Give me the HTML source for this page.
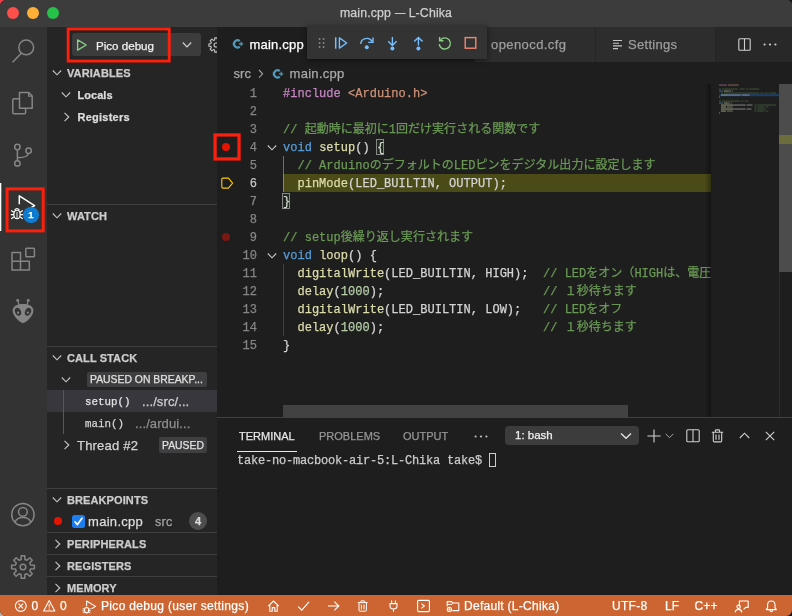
<!DOCTYPE html>
<html lang="ja">
<head>
<meta charset="utf-8">
<title>main.cpp — L-Chika</title>
<style>
*{box-sizing:border-box;margin:0;padding:0}
html,body{width:792px;height:616px;overflow:hidden;background:#161616}
body{-webkit-text-stroke:0.25px;font-family:"Liberation Sans","Noto Sans CJK JP",sans-serif;font-size:13px;color:#ccc;position:relative}
.abs{position:absolute}
#win{will-change:transform;position:absolute;left:0;top:0;width:792px;height:616px;overflow:hidden;border-radius:6px 5px 6px 6px;background:#1e1e1e}
#title{left:0;top:0;width:792px;height:27px;background:#3c3c3c;text-align:center;line-height:27px;font-size:12.3px;letter-spacing:0.15px;color:#cfcfcf}
.tl{position:absolute;top:7px;width:12px;height:12px;border-radius:50%}
#act{left:0;top:27px;width:47px;height:568px;background:#333333}
#side{left:47px;top:27px;width:170px;height:568px;background:#252526}
#status{left:0;top:595px;width:792px;height:21px;background:#cc6531;color:#fff;font-size:12px}
#status span{position:absolute;top:0;line-height:22px;white-space:nowrap}
.hdr{position:absolute;left:0;width:170px;height:22px;line-height:22px;font-size:11px;font-weight:bold;color:#ccc;padding-left:20px;letter-spacing:0.1px}
.sep{position:absolute;left:0;width:170px;height:1px;background:#3f3f40}
.chev{position:absolute;width:16px;height:16px}
.row{position:absolute;left:0;width:170px;height:22px;line-height:22px;white-space:nowrap}
.code{margin-top:1px;letter-spacing:0.02px;font-family:"Liberation Mono","Noto Sans CJK JP",monospace;font-size:12px;line-height:18px;white-space:pre;position:absolute;left:283px;height:18px;color:#d4d4d4}
.ln{margin-top:1px;font-family:"Liberation Mono",monospace;font-size:12px;line-height:18px;position:absolute;left:226px;width:31px;text-align:right;color:#858585;height:18px}
.c{color:#6a9955}.k{color:#569cd6}.f{color:#dcdcaa}.p{color:#c586c0}.s{color:#ce9178}.n{color:#b5cea8}.m{color:#569cd6}
.redbox{position:absolute;border:2px solid #f4220f}
svg{position:absolute;overflow:visible}
</style>
</head>
<body>
<div class="abs" style="left:0;top:0;width:6px;height:6px;background:#e8444c"></div><div class="abs" style="left:0;top:610px;width:6px;height:6px;background:#b4b4b4"></div>
<div id="win">
<!-- title bar -->
<div id="title" class="abs">main.cpp <span style="display:inline-block;transform:scaleX(0.84);margin:0 -1px">—</span> L-Chika</div>
<div class="tl" style="left:7px;background:#fd4f4c"></div>
<div class="tl" style="left:27px;background:#fdb035"></div>
<div class="tl" style="left:47px;background:#27c24a"></div>

<!-- activity bar -->
<div id="act" class="abs"></div>

<!-- activity icons -->
<svg style="left:0;top:27px" width="47" height="568" viewBox="0 27 47 568" fill="none" stroke="#858585" stroke-width="1.5">
<!-- search -->
<circle cx="26.2" cy="47.4" r="7.4"/><path d="M21.3 53.2 L12.6 62.2"/>
<!-- explorer -->
<path d="M19.5 108.2 V92.5 H28.8 L32.2 96 V108.2 Z" stroke-linejoin="round"/><path d="M28.6 92.6 V96.2 H32.2" stroke-width="1.2"/>
<path d="M19.3 98.8 H14 Q12.8 98.8 12.8 100 V112.6 Q12.8 113.8 14 113.8 H24.4 Q25.6 113.8 25.6 112.6 V108.4" />
<!-- scm -->
<circle cx="17.4" cy="147" r="2.7"/><circle cx="17.4" cy="163.4" r="2.7"/><circle cx="28.6" cy="150.7" r="2.7"/>
<path d="M17.4 149.8 V160.6"/><path d="M28.3 153.5 Q27.8 157.6 17.6 157.8"/>
<!-- extensions -->
<path d="M12 252.6 H20.5 V261.3 H29.3 V270 H12 Z M12 261.3 H20.5 V270" stroke-linejoin="round"/>
<rect x="25.8" y="248.2" width="8.6" height="8.6" rx="0.8"/>
<!-- account -->
<circle cx="22.9" cy="514.6" r="11.2"/><circle cx="22.9" cy="511.8" r="4.4"/><path d="M15 522.4 Q16.4 517.4 22.9 517.4 Q29.4 517.4 30.8 522.4"/>
</svg>
<!-- gear -->
<svg style="left:10px;top:554px" width="26" height="26" viewBox="-13 -13 26 26" fill="none" stroke="#858585" stroke-width="1.5" stroke-linejoin="round">
<path d="M-1.93 -7.56 L-1.72 -11.37 L1.72 -11.37 L1.93 -7.56 L3.98 -6.71 L6.83 -9.26 L9.26 -6.83 L6.71 -3.98 L7.56 -1.93 L11.37 -1.72 L11.37 1.72 L7.56 1.93 L6.71 3.98 L9.26 6.83 L6.83 9.26 L3.98 6.71 L1.93 7.56 L1.72 11.37 L-1.72 11.37 L-1.93 7.56 L-3.98 6.71 L-6.83 9.26 L-9.26 6.83 L-6.71 3.98 L-7.56 1.93 L-11.37 1.72 L-11.37 -1.72 L-7.56 -1.93 L-6.71 -3.98 L-9.26 -6.83 L-6.83 -9.26 L-3.98 -6.71 Z"/>
<circle cx="0" cy="0" r="2.8"/>
</svg>
<!-- platformio alien -->
<svg style="left:0;top:295px" width="47" height="32" viewBox="0 295 47 32">
<path d="M23 304 C29.5 304 33.4 306.6 33.4 310.6 C33.4 315.6 27 322.2 23 323.2 C19 322.2 12.6 315.6 12.6 310.6 C12.6 306.6 16.5 304 23 304 Z" fill="#858585"/>
<path d="M18.9 305 L17.9 300.6 M27.1 305 L28.1 300.6" stroke="#858585" stroke-width="1.2" fill="none"/>
<circle cx="17.7" cy="300.4" r="1.45" fill="#858585"/><circle cx="28.2" cy="300.4" r="1.45" fill="#858585"/>
<ellipse cx="18" cy="311.8" rx="2.9" ry="4.1" transform="rotate(-24 18 311.8)" fill="#343434"/>
<ellipse cx="28" cy="311.8" rx="2.9" ry="4.1" transform="rotate(24 28 311.8)" fill="#343434"/>
<circle cx="18.1" cy="312.7" r="1.15" fill="#858585"/><circle cx="27.9" cy="312.7" r="1.15" fill="#858585"/>
</svg>
<!-- debug active -->
<svg style="left:0;top:183px" width="3" height="48"><rect x="0" y="0" width="1.3" height="48" fill="#fff"/></svg>
<svg style="left:0;top:183px" width="47" height="50" viewBox="0 183 47 50" fill="none" stroke="#fff" stroke-width="1.5">
<path d="M19.3 204.2 V195.8 L34.6 205.7 L31.2 207.6" stroke-linejoin="round"/>
<ellipse cx="17" cy="214.4" rx="3.2" ry="4.3" stroke-width="1.3"/>
<path d="M14.6 210.2 Q17 206.8 19.4 210.2" stroke-width="1.2"/>
<path d="M17 212 V218.4" stroke-width="0.9"/>
<path d="M11.2 210.4 L13.8 212.2 M10.8 214.6 H13.6 M11.2 218.8 L13.8 217 M22.8 210.4 L20.2 212.2 M23.2 214.6 H20.4 M22.8 218.8 L20.2 217" stroke-width="1.2"/>
</svg>
<div class="abs" style="left:23.4px;top:207.4px;width:15.2px;height:15.2px;border-radius:50%;background:#0e7bd0;color:#fff;font-size:9.5px;font-weight:bold;line-height:15.5px;text-align:center">1</div>
<svg style="left:0;top:0" width="792" height="616" viewBox="0 0 792 616"><rect x="7.10" y="188.90" width="36.10" height="42.00" fill="none" stroke="#fb1f0c" stroke-width="3.0"/></svg>

<!-- sidebar -->
<div id="side" class="abs"></div>

<!-- debug dropdown -->
<div class="abs" style="left:72px;top:33px;width:129px;height:23px;background:#3c3c3c;border-radius:3px"></div>
<svg style="left:76px;top:39px" width="12" height="12" viewBox="0 0 12 12"><path d="M1.6 0.9 L10.2 6 L1.6 11.1 Z" fill="none" stroke="#89d185" stroke-width="1.3" stroke-linejoin="round"/></svg>
<div class="abs" style="left:96px;top:33.5px;height:23px;line-height:23px;font-size:11.6px;color:#f0f0f0;white-space:nowrap">Pico debug</div>
<svg style="left:182px;top:41px" width="10" height="8" viewBox="0 0 10 8"><path d="M0.8 1.5 L5 5.8 L9.2 1.5" fill="none" stroke="#d0d0d0" stroke-width="1.2"/></svg>
<svg style="left:0;top:0" width="792" height="616" viewBox="0 0 792 616"><rect x="68.15" y="28.95" width="101.10" height="32.10" fill="none" stroke="#fb1f0c" stroke-width="2.9"/></svg>
<!-- gear (clipped) -->
<div class="abs" style="left:205px;top:35px;width:12px;height:20px;overflow:hidden"><svg style="left:3px;top:2.3px" width="16" height="16" viewBox="-8 -8 16 16" fill="none" stroke="#c5c5c5" stroke-width="1.1" stroke-linejoin="round"><path d="M-1.41 -5.11 L-1.22 -7.10 L1.22 -7.10 L1.41 -5.11 L2.61 -4.61 L4.16 -5.88 L5.88 -4.16 L4.61 -2.61 L5.11 -1.41 L7.10 -1.22 L7.10 1.22 L5.11 1.41 L4.61 2.61 L5.88 4.16 L4.16 5.88 L2.61 4.61 L1.41 5.11 L1.22 7.10 L-1.22 7.10 L-1.41 5.11 L-2.61 4.61 L-4.16 5.88 L-5.88 4.16 L-4.61 2.61 L-5.11 1.41 L-7.10 1.22 L-7.10 -1.22 L-5.11 -1.41 L-4.61 -2.61 L-5.88 -4.16 L-4.16 -5.88 L-2.61 -4.61 Z"/><circle cx="0" cy="0" r="2"/></svg></div>

<!-- VARIABLES -->
<div class="hdr" style="left:47px;top:62px">VARIABLES</div>
<svg style="left:52px;top:69px" width="10" height="8" viewBox="0 0 10 8"><path d="M0.8 1.5 L5 5.8 L9.2 1.5" fill="none" stroke="#c5c5c5" stroke-width="1.1"/></svg>
<div class="row" style="left:47px;top:84px;padding-left:30.5px;letter-spacing:0.05px;font-size:11px;font-weight:bold;color:#ddd">Locals</div>
<svg style="left:61px;top:91px" width="10" height="8" viewBox="0 0 10 8"><path d="M0.8 1.5 L5 5.8 L9.2 1.5" fill="none" stroke="#c5c5c5" stroke-width="1.1"/></svg>
<div class="row" style="left:47px;top:106px;padding-left:30.5px;letter-spacing:0.25px;font-size:11px;font-weight:bold;color:#ddd">Registers</div>
<svg style="left:63px;top:112px" width="8" height="10" viewBox="0 0 8 10"><path d="M1.5 0.8 L5.8 5 L1.5 9.2" fill="none" stroke="#c5c5c5" stroke-width="1.1"/></svg>

<!-- WATCH -->
<div class="sep" style="left:47px;top:204px"></div>
<div class="hdr" style="left:47px;top:205px">WATCH</div>
<svg style="left:52px;top:212px" width="10" height="8" viewBox="0 0 10 8"><path d="M0.8 1.5 L5 5.8 L9.2 1.5" fill="none" stroke="#c5c5c5" stroke-width="1.1"/></svg>

<!-- CALL STACK -->
<div class="sep" style="left:47px;top:346px"></div>
<div class="hdr" style="left:47px;top:347px">CALL STACK</div>
<svg style="left:52px;top:354px" width="10" height="8" viewBox="0 0 10 8"><path d="M0.8 1.5 L5 5.8 L9.2 1.5" fill="none" stroke="#c5c5c5" stroke-width="1.1"/></svg>
<svg style="left:61px;top:376px" width="10" height="8" viewBox="0 0 10 8"><path d="M0.8 1.5 L5 5.8 L9.2 1.5" fill="none" stroke="#c5c5c5" stroke-width="1.1"/></svg>
<div class="abs" style="left:87px;top:372px;width:120px;height:15px;background:#3f3f41;border-radius:2px;font-size:10.4px;line-height:16px;color:#e0e0e0;padding-left:3px;white-space:nowrap;overflow:hidden;letter-spacing:0">PAUSED ON BREAKP...</div>
<div class="abs" style="left:47px;top:390px;width:170px;height:22px;background:#37373d"></div>
<div class="abs" style="left:63px;top:390px;width:1px;height:44px;background:#585858"></div>
<div class="abs" style="left:85px;top:390.5px;height:22px;line-height:22px;font-family:'Liberation Mono',monospace;font-size:10.8px;color:#e4e4e4;white-space:nowrap">setup()</div>
<div class="abs" style="left:142px;top:390.5px;letter-spacing:0.1px;height:22px;line-height:22px;font-size:13px;color:#d0d0d0;white-space:nowrap">.../src/...</div>
<div class="abs" style="left:85px;top:413px;height:22px;line-height:22px;font-family:'Liberation Mono',monospace;font-size:10.8px;color:#d4d4d4;white-space:nowrap">main()</div>
<div class="abs" style="left:135px;top:413px;letter-spacing:0.1px;height:22px;line-height:22px;font-size:13px;color:#8f8f8f;white-space:nowrap">.../ardui...</div>
<svg style="left:63px;top:440px" width="8" height="10" viewBox="0 0 8 10"><path d="M1.5 0.8 L5.8 5 L1.5 9.2" fill="none" stroke="#c5c5c5" stroke-width="1.1"/></svg>
<div class="abs" style="left:77px;top:434.5px;height:22px;line-height:22px;font-size:13px;letter-spacing:0.2px;color:#d4d4d4;white-space:nowrap">Thread #2</div>
<div class="abs" style="left:159px;top:437px;width:48px;height:16px;background:#3f3f41;border-radius:2px;font-size:10.4px;line-height:17px;color:#e0e0e0;text-align:center;letter-spacing:0">PAUSED</div>

<!-- BREAKPOINTS -->
<div class="sep" style="left:47px;top:488px"></div>
<div class="hdr" style="left:47px;top:489px">BREAKPOINTS</div>
<svg style="left:52px;top:496px" width="10" height="8" viewBox="0 0 10 8"><path d="M0.8 1.5 L5 5.8 L9.2 1.5" fill="none" stroke="#c5c5c5" stroke-width="1.1"/></svg>
<div class="abs" style="left:54px;top:517px;width:8px;height:8px;border-radius:50%;background:#e51400"></div>
<div class="abs" style="left:72px;top:515px;width:13px;height:13px;border-radius:2.5px;background:#1c7cf0"></div>
<svg style="left:72px;top:515px" width="13" height="13" viewBox="0 0 13 13"><path d="M3 6.8 L5.4 9.6 L10 3.2" fill="none" stroke="#fff" stroke-width="1.7" stroke-linecap="round" stroke-linejoin="round"/></svg>
<div class="abs" style="left:88px;top:510.5px;height:22px;line-height:22px;font-size:13px;letter-spacing:0.3px;color:#dcdcdc;white-space:nowrap">main.cpp</div>
<div class="abs" style="left:155px;top:510.5px;height:22px;line-height:22px;font-size:12.5px;letter-spacing:0.3px;color:#a5a5a5;white-space:nowrap">src</div>
<div class="abs" style="left:189px;top:512px;width:18px;height:18px;border-radius:50%;background:#4d4d4d;font-size:11px;line-height:18px;color:#ddd;text-align:center;font-weight:bold">4</div>
<div class="sep" style="left:47px;top:532px"></div>
<div class="hdr" style="left:47px;top:533px">PERIPHERALS</div>
<svg style="left:54px;top:539px" width="8" height="10" viewBox="0 0 8 10"><path d="M1.5 0.8 L5.8 5 L1.5 9.2" fill="none" stroke="#c5c5c5" stroke-width="1.1"/></svg>
<div class="sep" style="left:47px;top:554px"></div>
<div class="hdr" style="left:47px;top:555px">REGISTERS</div>
<svg style="left:54px;top:561px" width="8" height="10" viewBox="0 0 8 10"><path d="M1.5 0.8 L5.8 5 L1.5 9.2" fill="none" stroke="#c5c5c5" stroke-width="1.1"/></svg>
<div class="sep" style="left:47px;top:576px"></div>
<div class="hdr" style="left:47px;top:577px">MEMORY</div>
<svg style="left:54px;top:583px" width="8" height="10" viewBox="0 0 8 10"><path d="M1.5 0.8 L5.8 5 L1.5 9.2" fill="none" stroke="#c5c5c5" stroke-width="1.1"/></svg>

<!-- editor -->
<div id="editor" class="abs" style="left:217px;top:27px;width:575px;height:568px"></div>

<!-- tab bar -->
<div class="abs" style="left:217px;top:27px;width:575px;height:35px;background:#252526"></div>
<div class="abs" style="left:217px;top:27px;width:257px;height:35px;background:#1e1e1e"></div>
<div class="abs" style="left:475px;top:27px;width:120px;height:35px;background:#2d2d2d"></div>
<div class="abs" style="left:596px;top:27px;width:119px;height:35px;background:#2d2d2d"></div>
<div class="abs" style="left:716px;top:27px;width:76px;height:35px;background:#282828"></div>
<div class="abs" style="left:249.5px;top:27px;height:35px;line-height:35px;font-size:13px;letter-spacing:0.2px;color:#fff;white-space:nowrap">main.cpp</div>
<div class="abs" style="left:491px;top:27px;height:35px;line-height:35px;font-size:13px;letter-spacing:0.42px;color:#9d9d9d;white-space:nowrap">openocd.cfg</div>
<div class="abs" style="left:628px;top:27px;height:35px;line-height:35px;font-size:13px;letter-spacing:0.3px;color:#9d9d9d;white-space:nowrap">Settings</div>
<!-- breadcrumbs -->
<div class="abs" style="left:233.4px;top:62.7px;letter-spacing:0.2px;height:22px;line-height:22px;font-size:13px;color:#a9a9a9;white-space:nowrap">src</div>
<div class="abs" style="left:289.5px;top:62.7px;height:22px;line-height:22px;font-size:13px;letter-spacing:0.3px;color:#a9a9a9;white-space:nowrap">main.cpp</div>
<!-- current line highlight -->
<div class="abs" style="left:283px;top:174px;width:428px;height:18px;background:#4b4b18"></div>
<!-- indent guides -->
<div class="abs" style="left:283px;top:156px;width:1px;height:36px;background:#6e6e6e"></div>
<div class="abs" style="left:283px;top:174px;width:1px;height:18px;background:#8a8a6a"></div>
<div class="abs" style="left:283px;top:264px;width:1px;height:72px;background:#404040"></div>
<!-- bracket match -->
<div class="abs" style="left:376px;top:139px;width:8px;height:16px;border:1px solid #888;background:#1e2a1e"></div>
<div class="abs" style="left:282px;top:193px;width:8px;height:16px;border:1px solid #888;background:#1e2a1e"></div>
<div class="ln" style="top:84px;color:#858585">1</div><div class="code" style="top:84px"><span class="p">#include</span> <span class="s">&lt;Arduino.h&gt;</span></div>
<div class="ln" style="top:102px;color:#858585">2</div><div class="code" style="top:102px"></div>
<div class="ln" style="top:120px;color:#858585">3</div><div class="code" style="top:120px"><span class="c">// 起動時に最初に1回だけ実行される関数です</span></div>
<div class="ln" style="top:138px;color:#858585">4</div><div class="code" style="top:138px"><span class="k">void</span> <span class="f">setup</span>() {</div>
<div class="ln" style="top:156px;color:#858585">5</div><div class="code" style="top:156px">  <span class="c">// ArduinoのデフォルトのLEDピンをデジタル出力に設定します</span></div>
<div class="ln" style="top:174px;color:#c6c6c6">6</div><div class="code" style="top:174px">  <span class="f">pinMode</span>(LED_BUILTIN, OUTPUT);</div>
<div class="ln" style="top:192px;color:#858585">7</div><div class="code" style="top:192px">}</div>
<div class="ln" style="top:210px;color:#858585">8</div><div class="code" style="top:210px"></div>
<div class="ln" style="top:228px;color:#858585">9</div><div class="code" style="top:228px"><span class="c">// setup後繰り返し実行されます</span></div>
<div class="ln" style="top:246px;color:#858585">10</div><div class="code" style="top:246px"><span class="k">void</span> <span class="f">loop</span>() {</div>
<div class="ln" style="top:264px;color:#858585">11</div><div class="code" style="top:264px">  <span class="f">digitalWrite</span>(LED_BUILTIN, HIGH);  <span class="c">// LEDをオン（HIGHは、電圧を高くする）</span></div>
<div class="ln" style="top:282px;color:#858585">12</div><div class="code" style="top:282px">  <span class="f">delay</span>(<span class="n">1000</span>);                      <span class="c">// １秒待ちます</span></div>
<div class="ln" style="top:300px;color:#858585">13</div><div class="code" style="top:300px">  <span class="f">digitalWrite</span>(LED_BUILTIN, LOW);   <span class="c">// LEDをオフ</span></div>
<div class="ln" style="top:318px;color:#858585">14</div><div class="code" style="top:318px">  <span class="f">delay</span>(<span class="n">1000</span>);                      <span class="c">// １秒待ちます</span></div>
<div class="ln" style="top:336px;color:#858585">15</div><div class="code" style="top:336px">}</div>

<!-- minimap + scrollbars -->
<div class="abs" style="left:705px;top:84px;width:6px;height:333px;background:linear-gradient(90deg,rgba(0,0,0,0),rgba(0,0,0,0.35))"></div>
<div class="abs" style="left:711px;top:84px;width:81px;height:333px;background:#1e1e1e"></div>
<!-- minimap content -->
<svg style="left:0;top:0" width="792" height="616" viewBox="0 0 792 616"><rect x="719" y="94" width="60" height="2.2" fill="#1f3c5e"/><rect x="719.0" y="84.4" width="7.9" height="1.3" fill="#c586c0" opacity="0.46"/><rect x="727.9" y="84.4" width="10.8" height="1.3" fill="#ce9178" opacity="0.46"/><rect x="719.0" y="88.4" width="2.0" height="1.3" fill="#6a9955" opacity="0.37"/><rect x="722.0" y="88.4" width="15.8" height="1.3" fill="#6a9955" opacity="0.34"/><rect x="739.7" y="88.4" width="4.9" height="1.3" fill="#6a9955" opacity="0.34"/><rect x="745.6" y="88.4" width="3.0" height="1.3" fill="#6a9955" opacity="0.31"/><rect x="749.5" y="88.4" width="9.8" height="1.3" fill="#6a9955" opacity="0.34"/><rect x="719.0" y="90.4" width="3.9" height="1.3" fill="#569cd6" opacity="0.46"/><rect x="723.9" y="90.4" width="4.9" height="1.3" fill="#dcdcaa" opacity="0.46"/><rect x="728.9" y="90.4" width="2.0" height="1.3" fill="#d4d4d4" opacity="0.37"/><rect x="731.8" y="90.4" width="1.0" height="1.3" fill="#d4d4d4" opacity="0.37"/><rect x="721.0" y="92.4" width="2.0" height="1.3" fill="#6a9955" opacity="0.37"/><rect x="723.9" y="92.4" width="35.5" height="1.3" fill="#6a9955" opacity="0.34"/><rect x="760.4" y="92.4" width="3.0" height="1.3" fill="#6a9955" opacity="0.31"/><rect x="764.3" y="92.4" width="4.9" height="1.3" fill="#6a9955" opacity="0.31"/><rect x="770.2" y="92.4" width="5.9" height="1.3" fill="#6a9955" opacity="0.34"/><rect x="721.0" y="94.4" width="6.9" height="1.3" fill="#dcdcaa" opacity="0.50"/><rect x="727.9" y="94.4" width="12.8" height="1.3" fill="#d4d4d4" opacity="0.43"/><rect x="741.7" y="94.4" width="7.9" height="1.3" fill="#d4d4d4" opacity="0.43"/><rect x="719.0" y="96.4" width="1.0" height="1.3" fill="#d4d4d4" opacity="0.43"/><rect x="719.0" y="100.4" width="2.0" height="1.3" fill="#6a9955" opacity="0.37"/><rect x="722.0" y="100.4" width="17.7" height="1.3" fill="#6a9955" opacity="0.34"/><rect x="740.7" y="100.4" width="3.0" height="1.3" fill="#6a9955" opacity="0.31"/><rect x="744.6" y="100.4" width="3.9" height="1.3" fill="#6a9955" opacity="0.31"/><rect x="719.0" y="102.4" width="3.9" height="1.3" fill="#569cd6" opacity="0.46"/><rect x="723.9" y="102.4" width="3.9" height="1.3" fill="#dcdcaa" opacity="0.46"/><rect x="727.9" y="102.4" width="2.0" height="1.3" fill="#d4d4d4" opacity="0.37"/><rect x="730.8" y="102.4" width="1.0" height="1.3" fill="#d4d4d4" opacity="0.37"/><rect x="721.0" y="104.4" width="11.8" height="1.3" fill="#dcdcaa" opacity="0.50"/><rect x="732.8" y="104.4" width="12.8" height="1.3" fill="#d4d4d4" opacity="0.43"/><rect x="746.6" y="104.4" width="5.9" height="1.3" fill="#d4d4d4" opacity="0.43"/><rect x="754.5" y="104.4" width="2.0" height="1.3" fill="#6a9955" opacity="0.37"/><rect x="757.4" y="104.4" width="18.7" height="1.3" fill="#6a9955" opacity="0.34"/><rect x="721.0" y="106.4" width="4.9" height="1.3" fill="#dcdcaa" opacity="0.50"/><rect x="726.9" y="106.4" width="3.9" height="1.3" fill="#b5cea8" opacity="0.43"/><rect x="730.8" y="106.4" width="2.0" height="1.3" fill="#d4d4d4" opacity="0.37"/><rect x="754.5" y="106.4" width="2.0" height="1.3" fill="#6a9955" opacity="0.37"/><rect x="757.4" y="106.4" width="6.9" height="1.3" fill="#6a9955" opacity="0.34"/><rect x="765.3" y="106.4" width="3.0" height="1.3" fill="#6a9955" opacity="0.31"/><rect x="721.0" y="108.4" width="11.8" height="1.3" fill="#dcdcaa" opacity="0.50"/><rect x="732.8" y="108.4" width="12.8" height="1.3" fill="#d4d4d4" opacity="0.43"/><rect x="746.6" y="108.4" width="4.9" height="1.3" fill="#d4d4d4" opacity="0.43"/><rect x="754.5" y="108.4" width="2.0" height="1.3" fill="#6a9955" opacity="0.37"/><rect x="757.4" y="108.4" width="7.9" height="1.3" fill="#6a9955" opacity="0.34"/><rect x="721.0" y="110.4" width="4.9" height="1.3" fill="#dcdcaa" opacity="0.50"/><rect x="726.9" y="110.4" width="3.9" height="1.3" fill="#b5cea8" opacity="0.43"/><rect x="730.8" y="110.4" width="2.0" height="1.3" fill="#d4d4d4" opacity="0.37"/><rect x="754.5" y="110.4" width="2.0" height="1.3" fill="#6a9955" opacity="0.37"/><rect x="757.4" y="110.4" width="6.9" height="1.3" fill="#6a9955" opacity="0.34"/><rect x="765.3" y="110.4" width="3.0" height="1.3" fill="#6a9955" opacity="0.31"/><rect x="719.0" y="112.4" width="1.0" height="1.3" fill="#d4d4d4" opacity="0.43"/></svg>
<div class="abs" style="left:779px;top:272px;width:1px;height:145px;background:#2c2c2c"></div>
<div class="abs" style="left:779px;top:84px;width:13px;height:188px;background:#4c4c4c"></div>
<div class="abs" style="left:779px;top:135px;width:13px;height:9px;background:#6c6c3c"></div>
<div class="abs" style="left:283px;top:405px;width:345px;height:12px;background:#424242"></div>
<!-- panel -->
<div class="abs" style="left:217px;top:417px;width:575px;height:1px;background:#414141"></div>
<div class="abs" style="left:239px;top:425px;height:22px;line-height:22px;font-size:11px;color:#e7e7e7;white-space:nowrap">TERMINAL</div>
<div class="abs" style="left:237px;top:451px;width:60px;height:1px;background:#e7e7e7"></div>
<div class="abs" style="left:319px;top:425px;height:22px;line-height:22px;font-size:11px;color:#969696;white-space:nowrap">PROBLEMS</div>
<div class="abs" style="left:403px;top:425px;height:22px;line-height:22px;font-size:11px;color:#969696;white-space:nowrap">OUTPUT</div>
<div class="abs" style="left:505px;top:426px;width:134px;height:19px;background:#3c3c3c;border-radius:4px"></div>
<div class="abs" style="left:515px;top:426px;height:19px;line-height:19px;font-size:11.5px;color:#f0f0f0;white-space:nowrap">1: bash</div>
<div class="abs" style="left:237px;top:452px;height:18px;line-height:18px;font-family:'Liberation Mono',monospace;font-size:12px;letter-spacing:-0.2px;color:#cccccc;white-space:pre">take-no-macbook-air-5:L-Chika take$ </div>
<div class="abs" style="left:489px;top:453px;width:7px;height:14px;border:1px solid #ccc"></div>


<!-- tab icons -->
<svg style="left:232px;top:39px" width="12" height="10" viewBox="0 0 12 10" fill="none" stroke="#519aba"><path d="M7.7 2.1 A3.5 3.6 0 1 0 7.7 7.7" stroke-width="2.25"/><path d="M6.9 4.9 H11.3 M9.2 2.8 V7" stroke-width="1.15"/></svg>
<svg style="left:272px;top:68.5px" width="12" height="10" viewBox="0 0 12 10" fill="none" stroke="#519aba"><path d="M7.7 2.1 A3.5 3.6 0 1 0 7.7 7.7" stroke-width="2.25"/><path d="M6.9 4.9 H11.3 M9.2 2.8 V7" stroke-width="1.15"/></svg>
<svg style="left:258px;top:69px" width="6" height="10" viewBox="0 0 6 10"><path d="M1 1 L4.6 4.8 L1 8.6" fill="none" stroke="#a0a0a0" stroke-width="1.1"/></svg>
<svg style="left:612px;top:39px" width="12" height="11" viewBox="0 0 12 11" stroke="#c5c5c5" stroke-width="1.1"><path d="M1 1.5 H10 M1 4.2 H7 M1 6.9 H10 M1 9.6 H6"/></svg>
<svg style="left:738px;top:38px" width="13" height="13" viewBox="0 0 13 13" fill="none" stroke="#d0d0d0" stroke-width="1.1"><rect x="0.8" y="0.8" width="11.4" height="11.4" rx="1"/><path d="M6.5 0.8 V12.2"/></svg>
<svg style="left:763px;top:43px" width="14" height="3" viewBox="0 0 14 3" fill="#d0d0d0"><circle cx="1.6" cy="1.5" r="1.1"/><circle cx="7" cy="1.5" r="1.1"/><circle cx="12.4" cy="1.5" r="1.1"/></svg>
<!-- debug toolbar -->
<div class="abs" style="left:307px;top:26px;width:180px;height:33px;background:#333333;box-shadow:0 1px 5px rgba(0,0,0,0.55)"></div>
<svg style="left:307px;top:27px" width="180" height="32" viewBox="307 27 180 32" fill="none" stroke-width="1.4">
<g fill="#868686"><circle cx="319.6" cy="39" r="0.95"/><circle cx="323.6" cy="39" r="0.95"/><circle cx="319.6" cy="43" r="0.95"/><circle cx="323.6" cy="43" r="0.95"/><circle cx="319.6" cy="47" r="0.95"/><circle cx="323.6" cy="47" r="0.95"/></g>
<path d="M335.7 37.3 V48.7" stroke="#75beff" stroke-width="1.5"/><path d="M339.4 37.9 L346.7 43 L339.4 48.1 Z" stroke="#75beff" stroke-linejoin="round"/>
<path d="M360.8 44 A6 5.6 0 0 1 372.2 41.6" stroke="#75beff"/><path d="M373 37.6 V42.4 H368.2" stroke="#75beff"/><circle cx="366.8" cy="47.2" r="2" fill="#75beff"/>
<path d="M392.4 37 V45 M388.2 41.2 L392.4 45.4 L396.6 41.2" stroke="#75beff"/><circle cx="392.4" cy="48.5" r="2" fill="#75beff"/>
<path d="M418.4 45.4 V37.6 M414.2 41.6 L418.4 37.4 L422.6 41.6" stroke="#75beff"/><circle cx="418.4" cy="48.5" r="2" fill="#75beff"/>
<path d="M440.5 39.8 A5.6 5.6 0 1 1 439.2 44.2" stroke="#89d185"/><path d="M439.6 37 V40.8 H443.4" stroke="#89d185"/>
<rect x="465.2" y="37.6" width="10.6" height="10.6" stroke="#f48771"/>
</svg>
<!-- glyph margin -->
<div class="abs" style="left:222px;top:143px;width:8px;height:8px;border-radius:50%;background:#e51400"></div>
<svg style="left:0;top:0" width="792" height="616" viewBox="0 0 792 616"><rect x="215.05" y="134.95" width="24.00" height="24.00" fill="none" stroke="#fb1f0c" stroke-width="3.3"/></svg>
<div class="abs" style="left:222px;top:233px;width:8px;height:8px;border-radius:50%;background:#7a1813"></div>
<svg style="left:221px;top:177px" width="13" height="12" viewBox="0 0 13 12"><path d="M1.8 1.1 H7.4 L11.6 6.1 L7.4 11.1 H1.8 Q0.8 11.1 0.8 10.1 V2.1 Q0.8 1.1 1.8 1.1 Z" fill="none" stroke="#ffcc00" stroke-width="1.1" stroke-linejoin="round"/></svg>
<svg style="left:267px;top:144px" width="10" height="8" viewBox="0 0 10 8"><path d="M0.8 1.5 L5 5.8 L9.2 1.5" fill="none" stroke="#c5c5c5" stroke-width="1.1"/></svg>
<svg style="left:267px;top:252px" width="10" height="8" viewBox="0 0 10 8"><path d="M0.8 1.5 L5 5.8 L9.2 1.5" fill="none" stroke="#c5c5c5" stroke-width="1.1"/></svg>
<!-- panel icons -->
<svg style="left:474px;top:434.5px" width="14" height="3" viewBox="0 0 14 3" fill="#c0c0c0"><circle cx="1.6" cy="1.5" r="1.1"/><circle cx="7" cy="1.5" r="1.1"/><circle cx="12.4" cy="1.5" r="1.1"/></svg>
<svg style="left:620px;top:432px" width="12" height="8" viewBox="0 0 12 8"><path d="M1 1.5 L6 6.3 L11 1.5" fill="none" stroke="#e0e0e0" stroke-width="1.4"/></svg>
<svg style="left:647px;top:429px" width="14" height="14" viewBox="0 0 14 14"><path d="M7 0.4 V13.6 M0.4 7 H13.6" stroke="#d0d0d0" stroke-width="1.1"/></svg>
<svg style="left:665px;top:433px" width="9" height="6" viewBox="0 0 9 6"><path d="M0.7 0.9 L4.5 4.7 L8.3 0.9" fill="none" stroke="#a8a8a8" stroke-width="1"/></svg>
<svg style="left:686px;top:429px" width="14" height="14" viewBox="0 0 14 14" fill="none" stroke="#d0d0d0" stroke-width="1.1"><rect x="0.8" y="0.8" width="12.4" height="12" rx="1"/><path d="M7 0.8 V12.8"/></svg>
<svg style="left:711px;top:429px" width="13" height="14" viewBox="0 0 13 14" fill="none" stroke="#d0d0d0" stroke-width="1.1"><path d="M0.8 3.2 H12.2 M4.4 3 V1.6 Q4.4 0.9 5.2 0.9 H7.8 Q8.6 0.9 8.6 1.6 V3 M2.3 3.4 V11.8 Q2.3 12.9 3.4 12.9 H9.6 Q10.7 12.9 10.7 11.8 V3.4 M5 5.4 V10.8 M8 5.4 V10.8"/></svg>
<svg style="left:739px;top:432px" width="11" height="7" viewBox="0 0 11 7"><path d="M0.8 6 L5.5 1.2 L10.2 6" fill="none" stroke="#d0d0d0" stroke-width="1.1"/></svg>
<svg style="left:765px;top:431px" width="10" height="10" viewBox="0 0 10 10"><path d="M0.8 0.8 L9.2 9.2 M9.2 0.8 L0.8 9.2" fill="none" stroke="#d0d0d0" stroke-width="1.1"/></svg>

<!-- status -->

<div id="status" class="abs">
<svg style="left:0;top:0" width="792" height="21" viewBox="0 595 792 21" fill="none" stroke="#fff" stroke-width="1.1">
<!-- error -->
<circle cx="20.8" cy="606" r="5.4"/><path d="M18.5 603.7 L23.1 608.3 M23.1 603.7 L18.5 608.3"/>
<!-- warning -->
<path d="M49.2 600.6 L54.8 611 H43.6 Z" stroke-linejoin="round"/><path d="M49.2 604 V607.6 M49.2 608.6 V609.8" stroke-width="1"/>
<!-- debug-alt -->
<path d="M86.6 606.2 V601 L95.6 606.4 L91.6 608.8" stroke-linejoin="round"/>
<ellipse cx="86.6" cy="610.2" rx="2.1" ry="2.7"/><path d="M82.6 608.6 L84.4 609.4 M82.4 610.8 H84.4 M82.8 613 L84.6 612 M90.6 608.6 L88.8 609.4 M90.8 610.8 H88.8 M90.4 613 L88.6 612" stroke-width="0.9"/>
<!-- home -->
<path d="M268.2 606.2 L273.5 601 L278.8 606.2 M269.8 605 V611.2 H272.2 V607.6 H274.8 V611.2 H277.2 V605" stroke-linejoin="round"/>
<!-- check -->
<path d="M298.2 606.6 L301.8 610.2 L309 601.8"/>
<!-- arrow -->
<path d="M328 606 H338.6 M334.4 601.6 L338.8 606 L334.4 610.4"/>
<!-- trash -->
<path d="M357.8 602.6 H367.6 M360.8 602.4 V601.4 Q360.8 600.8 361.4 600.8 H364 Q364.6 600.8 364.6 601.4 V602.4 M359 602.8 V610.2 Q359 611.2 360 611.2 H365.4 Q366.4 611.2 366.4 610.2 V602.8 M361.4 604.6 V609.4 M364 604.6 V609.4" stroke-width="1"/>
<!-- plug -->
<path d="M391.6 600.4 V603.4 M395.4 600.4 V603.4 M390 603.6 H397 V606 Q397 609 393.5 609 Q390 609 390 606 Z M393.5 609 V612"/>
<!-- terminal -->
<rect x="417.6" y="600.4" width="11.8" height="11.2" rx="1"/><path d="M421.4 603.6 L424.4 606 L421.4 608.4"/>
<!-- root folder -->
<path d="M447.2 606.4 V601.6 H451.6 L452.8 603 H458.8 V610.6 H452.4" stroke-linejoin="round"/><path d="M452.8 603 L451.8 604.4 H447.2" stroke-width="0.9"/><circle cx="449.4" cy="609.4" r="2.1"/><circle cx="449.4" cy="609.4" r="0.5" fill="#fff"/>
<!-- feedback -->
<path d="M739.4 606.6 V601 H748.2 V607.4 H745.6 L743.6 609.4" stroke-linejoin="round"/><circle cx="738.6" cy="606.8" r="1.7"/><path d="M735.2 612.4 Q735.4 609.4 738.6 609.4 Q741.4 609.4 741.9 612.4"/>
<!-- bell -->
<path d="M766.2 609.6 H776.4 L775 607.8 V605 Q775 601 771.3 601 Q767.6 601 767.6 605 V607.8 Z" stroke-linejoin="round"/><path d="M770 610 Q770 611.6 771.3 611.6 Q772.6 611.6 772.6 610"/>
</svg>
<span style="left:31.5px">0</span><span style="left:60px">0</span>
<span style="left:101px;letter-spacing:0.33px">Pico debug (user settings)</span>
<span style="left:464px;letter-spacing:0.28px">Default (L-Chika)</span>
<span style="left:612px;letter-spacing:0.3px">UTF-8</span>
<span style="left:665px">LF</span>
<span style="left:694.5px;letter-spacing:0.2px">C++</span>
</div>

</div>
</body>
</html>
